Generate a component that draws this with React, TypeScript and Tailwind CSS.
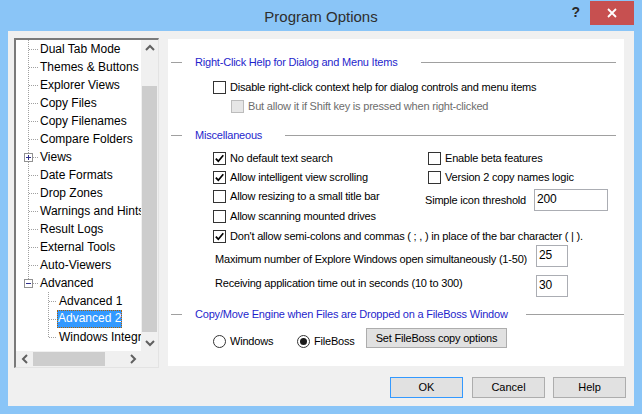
import React from "react";

const UI = { fontFamily: '"Liberation Sans", Arial, sans-serif' };

type GK = "leaf" | "plus" | "minus" | "child" | "childLast";

function Gutter({ kind }: { kind: GK }) {
  const dot = "#a0a0a0";
  if (kind === "child" || kind === "childLast") {
    return (
      <svg width="41" height="18" className="shrink-0" shapeRendering="crispEdges">
        <line x1="32.5" y1="0" x2="32.5" y2={kind === "child" ? 18 : 10} stroke={dot} strokeDasharray="1 1" />
        <line x1="33" y1="9.5" x2="41" y2="9.5" stroke={dot} strokeDasharray="1 1" />
      </svg>
    );
  }
  return (
    <svg width="24" height="18" className="shrink-0" shapeRendering="crispEdges">
      <line x1="12.5" y1="0" x2="12.5" y2={kind === "minus" ? 5 : 18} stroke={dot} strokeDasharray="1 1" />
      {kind === "leaf" ? (
        <line x1="13" y1="9.5" x2="23" y2="9.5" stroke={dot} strokeDasharray="1 1" />
      ) : (
        <>
          <rect x="8.5" y="5.5" width="8" height="8" fill="#fff" stroke="#919191" />
          <line x1="10" y1="9.5" x2="15" y2="9.5" stroke="#2f2f8a" />
          {kind === "plus" && <line x1="12.5" y1="7" x2="12.5" y2="12" stroke="#2f2f8a" />}
          <line x1="17" y1="9.5" x2="23" y2="9.5" stroke={dot} strokeDasharray="1 1" />
        </>
      )}
    </svg>
  );
}

const topItems: { label: string; kind: GK }[] = [
  { label: "Dual Tab Mode", kind: "leaf" },
  { label: "Themes & Buttons", kind: "leaf" },
  { label: "Explorer Views", kind: "leaf" },
  { label: "Copy Files", kind: "leaf" },
  { label: "Copy Filenames", kind: "leaf" },
  { label: "Compare Folders", kind: "leaf" },
  { label: "Views", kind: "plus" },
  { label: "Date Formats", kind: "leaf" },
  { label: "Drop Zones", kind: "leaf" },
  { label: "Warnings and Hints", kind: "leaf" },
  { label: "Result Logs", kind: "leaf" },
  { label: "External Tools", kind: "leaf" },
  { label: "Auto-Viewers", kind: "leaf" },
  { label: "Advanced", kind: "minus" },
];

const childItems: { label: string; kind: GK; sel?: boolean }[] = [
  { label: "Advanced 1", kind: "child" },
  { label: "Advanced 2", kind: "child", sel: true },
  { label: "Windows Integration", kind: "childLast" },
];

function Chevron({ dir }: { dir: "up" | "down" | "left" | "right" }) {
  const pts = {
    up: "4,9 8,5 12,9",
    down: "4,6 8,10 12,6",
    left: "10,4 6,8 10,12",
    right: "6,4 10,8 6,12",
  }[dir];
  return (
    <svg width="16" height="16" viewBox="0 0 16 16">
      <polyline points={pts} fill="none" stroke="#606060" strokeWidth="2" />
    </svg>
  );
}

function Tree() {
  return (
    <div className="w-[145px] h-[330px] flex flex-col border-t-2 border-l-2 border-t-[#7a7a7a] border-l-[#7a7a7a] border-r border-b border-r-[#e3e3e3] border-b-[#e3e3e3] bg-white shrink-0">
      <div className="flex flex-1 min-h-0">
        <div className="w-[125px] overflow-hidden text-[12px] text-black" style={UI}>
          {topItems.map((it) => (
            <div key={it.label} className="h-[18px] flex items-center whitespace-nowrap">
              <Gutter kind={it.kind} />
              <span className="leading-[18px]">{it.label}</span>
            </div>
          ))}
          {childItems.map((it) => (
            <div key={it.label} className="h-[18px] flex items-center whitespace-nowrap">
              <Gutter kind={it.kind} />
              {it.sel ? (
                <span className="h-[18px] leading-[16px] px-[1px] bg-[#3399ff] text-white outline outline-1 outline-dotted outline-[#b06000] -outline-offset-1">
                  {it.label}
                </span>
              ) : (
                <span className="leading-[18px] pl-[2px]">{it.label}</span>
              )}
            </div>
          ))}
        </div>
        <div className="w-[17px] bg-[#f0f0f0] flex flex-col">
          <div className="h-[17px] flex items-center justify-center">
            <Chevron dir="up" />
          </div>
          <div className="flex-1 flex flex-col pt-[29px] pb-[2px] px-px">
            <div className="flex-1 bg-[#cdcdcd]" />
          </div>
          <div className="h-[17px] flex items-center justify-center">
            <Chevron dir="down" />
          </div>
        </div>
      </div>
      <div className="h-[16px] flex shrink-0">
        <div className="w-[125px] bg-[#f0f0f0] flex">
          <div className="w-[17px] flex items-center justify-center">
            <Chevron dir="left" />
          </div>
          <div className="w-[72px] my-px bg-[#cdcdcd]" />
          <div className="flex-1" />
          <div className="w-[17px] flex items-center justify-center">
            <Chevron dir="right" />
          </div>
        </div>
        <div className="w-[17px] bg-[#f0f0f0]" />
      </div>
    </div>
  );
}

function Check({ checked, disabled }: { checked?: boolean; disabled?: boolean }) {
  return (
    <span
      className={
        "w-[13px] h-[13px] shrink-0 border flex items-center justify-center " +
        (disabled ? "bg-[#e6e6e6] border-[#bcbcbc]" : "bg-white border-[#333333]")
      }
    >
      {checked && (
        <svg width="11" height="11" viewBox="0 0 11 11">
          <polyline points="1.8,5.6 4.3,8.2 9.3,2.3" fill="none" stroke="#000" strokeWidth="1.7" />
        </svg>
      )}
    </span>
  );
}

function Radio({ checked }: { checked?: boolean }) {
  return (
    <span className="w-[13px] h-[13px] shrink-0 rounded-full border border-[#333333] bg-white flex items-center justify-center">
      {checked && <span className="w-[7px] h-[7px] rounded-full bg-[#1a1a1a]" />}
    </span>
  );
}

function Header({ title, gap = "ml-[23px]", mr = "mr-[8px]" }: { title: string; gap?: string; mr?: string }) {
  return (
    <div className="h-[20px] flex items-center">
      <span className="ml-[3px] w-[11px] h-px bg-[#a0a0a0]" />
      <span className="ml-[13px] text-[#1f1fcc] whitespace-nowrap">{title}</span>
      <span className={"flex-1 h-px bg-[#a0a0a0] " + gap + " " + mr} />
    </div>
  );
}

function Field({ value, w }: { value: string; w: string }) {
  return (
    <div className={"h-[22px] border border-[#abadb3] bg-white flex items-center pl-[2px] pb-[2px] text-[12px] " + w}>
      {value}
    </div>
  );
}

function CheckRow({ label, checked, h = "h-[18px]" }: { label: string; checked?: boolean; h?: string }) {
  return (
    <div className={"flex items-center gap-[4px] whitespace-nowrap " + h}>
      <Check checked={checked} />
      <span>{label}</span>
    </div>
  );
}

function Panel() {
  return (
    <div
      className="w-[456px] h-[327px] mt-px ml-[9px] bg-white flex flex-col pt-[13px] text-[11px] tracking-[-0.2px] text-black"
      style={UI}
    >
      <Header title="Right-Click Help for Dialog and Menu Items" />
      <div className="mt-[6px] pl-[45px]">
        <CheckRow label="Disable right-click context help for dialog controls and menu items" />
      </div>
      <div className="mt-px h-[18px] pl-[63px] flex items-center gap-[4px] whitespace-nowrap">
        <Check disabled />
        <span className="text-[#6d6d6d]">But allow it if Shift key is pressed when right-clicked</span>
      </div>
      <div className="mt-[10px]">
        <Header title="Miscellaneous" />
      </div>
      <div className="mt-[4px] flex">
        <div className="w-[260px] pl-[45px] flex flex-col gap-px">
          <CheckRow label="No default text search" checked />
          <CheckRow label="Allow intelligent view scrolling" checked />
          <CheckRow label="Allow resizing to a small title bar" h="h-[19px]" />
          <CheckRow label="Allow scanning mounted drives" h="h-[19px]" />
        </div>
        <div className="flex flex-col">
          <CheckRow label="Enable beta features" />
          <div className="mt-px">
            <CheckRow label="Version 2 copy names logic" />
          </div>
          <div className="mt-[3px] -ml-[3px] h-[22px] flex items-center whitespace-nowrap">
            <span className="w-[109px] pt-[1px]">Simple icon threshold</span>
            <Field value="200" w="w-[74px]" />
          </div>
        </div>
      </div>
      <div className="mt-px pl-[45px]">
        <CheckRow label="Don't allow semi-colons and commas ( ; , ) in place of the bar character ( | )." checked />
      </div>
      <div className="h-[22px] pl-[47px] flex items-start whitespace-nowrap">
        <span className="w-[321px] pt-[7px] leading-[14px]">Maximum number of Explore Windows open simultaneously (1-50)</span>
        <Field value="25" w="w-[32px]" />
      </div>
      <div className="mt-[8px] h-[22px] pl-[47px] flex items-start whitespace-nowrap">
        <span className="w-[321px] pt-px leading-[14px]">Receiving application time out in seconds (10 to 300)</span>
        <Field value="30" w="w-[32px]" />
      </div>
      <div className="mt-[7px]">
        <Header title="Copy/Move Engine when Files are Dropped on a FileBoss Window" gap="ml-[18px]" mr="mr-0" />
      </div>
      <div className="mt-[4px] h-[20px] pl-[45px] flex items-start whitespace-nowrap">
        <div className="w-[84px] mt-[4px] h-[18px] flex items-center gap-[4px]">
          <Radio />
          <span>Windows</span>
        </div>
        <div className="w-[69px] mt-[4px] h-[18px] flex items-center gap-[4px]">
          <Radio checked />
          <span>FileBoss</span>
        </div>
        <div className="w-[141px] h-[20px] bg-[#e1e1e1] border border-[#adadad] flex items-center justify-center">
          Set FileBoss copy options
        </div>
      </div>
    </div>
  );
}

function DlgButton({ label, def }: { label: string; def?: boolean }) {
  return (
    <div
      className={
        "w-[73px] h-[21px] bg-[#e1e1e1] border flex items-center justify-center text-[11px] text-black " +
        (def ? "border-[#3399ff]" : "border-[#adadad]")
      }
      style={UI}
    >
      {label}
    </div>
  );
}

export default function App() {
  return (
    <div className="w-[642px] h-[414px] bg-[#8ac5f7] flex flex-col overflow-hidden">
      <div className="h-[31px] grid grid-cols-[1fr_auto_1fr] shrink-0">
        <div />
        <div className="pt-[7px] text-[15px] text-[#2e2e2e] leading-[20px]" style={UI}>
          Program Options
        </div>
        <div className="flex justify-end items-start pr-[8px]">
          <span className="mt-[4px] mr-[10px] text-[14px] font-bold text-[#2a2a2a] leading-[16px]" style={UI}>
            ?
          </span>
          <div className="mt-px w-[44px] h-[24px] bg-[#c75050] flex items-center justify-center">
            <svg width="10" height="10" viewBox="0 0 10 10">
              <path d="M1 1 L9 9 M9 1 L1 9" stroke="#fff" strokeWidth="1.8" />
            </svg>
          </div>
        </div>
      </div>
      <div className="mx-[8px] h-[375px] bg-[#f0f0f0] flex flex-col pt-[7px] pl-[6px]">
        <div className="flex items-start">
          <Tree />
          <Panel />
        </div>
        <div className="mt-[9px] flex justify-end pr-[8px] gap-[8px]">
          <DlgButton label="OK" def />
          <div className="ml-px">
            <DlgButton label="Cancel" />
          </div>
          <DlgButton label="Help" />
        </div>
      </div>
    </div>
  );
}
